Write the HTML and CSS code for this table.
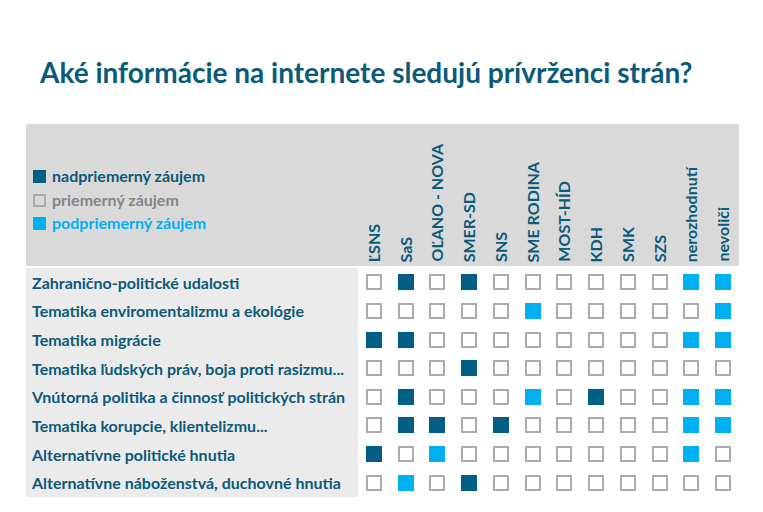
FILE: index.html
```html
<!DOCTYPE html>
<html lang="sk">
<head>
<meta charset="utf-8">
<title>Aké informácie na internete sledujú prívrženci strán?</title>
<link rel="stylesheet" href="styles.css">
</head>
<body>
<h1 class="title">Aké informácie na internete sledujú prívrženci strán?</h1>
<div class="chart">
  <div class="head">
    <div class="legend">
      <div class="leg leg-d"><span class="sq d"></span>nadpriemerný záujem</div>
      <div class="leg leg-e"><span class="sq e"></span>priemerný záujem</div>
      <div class="leg leg-l"><span class="sq l"></span>podpriemerný záujem</div>
    </div>
    <div class="colhead"><span>ĽSNS</span></div>
    <div class="colhead"><span>SaS</span></div>
    <div class="colhead"><span>OĽANO - NOVA</span></div>
    <div class="colhead"><span>SMER-SD</span></div>
    <div class="colhead"><span>SNS</span></div>
    <div class="colhead"><span>SME RODINA</span></div>
    <div class="colhead"><span>MOST-HÍD</span></div>
    <div class="colhead"><span>KDH</span></div>
    <div class="colhead"><span>SMK</span></div>
    <div class="colhead"><span>SZS</span></div>
    <div class="colhead"><span>nerozhodnutí</span></div>
    <div class="colhead"><span>nevoliči</span></div>
  </div>
  <div class="body">
    <div class="label">Zahranično-politické udalosti</div>
    <div class="cell"><span class="sq e"></span></div><div class="cell"><span class="sq d"></span></div><div class="cell"><span class="sq e"></span></div><div class="cell"><span class="sq d"></span></div><div class="cell"><span class="sq e"></span></div><div class="cell"><span class="sq e"></span></div><div class="cell"><span class="sq e"></span></div><div class="cell"><span class="sq e"></span></div><div class="cell"><span class="sq e"></span></div><div class="cell"><span class="sq e"></span></div><div class="cell"><span class="sq l"></span></div><div class="cell"><span class="sq l"></span></div>

    <div class="label">Tematika enviromentalizmu a ekológie</div>
    <div class="cell"><span class="sq e"></span></div><div class="cell"><span class="sq e"></span></div><div class="cell"><span class="sq e"></span></div><div class="cell"><span class="sq e"></span></div><div class="cell"><span class="sq e"></span></div><div class="cell"><span class="sq l"></span></div><div class="cell"><span class="sq e"></span></div><div class="cell"><span class="sq e"></span></div><div class="cell"><span class="sq e"></span></div><div class="cell"><span class="sq e"></span></div><div class="cell"><span class="sq e"></span></div><div class="cell"><span class="sq l"></span></div>

    <div class="label">Tematika migrácie</div>
    <div class="cell"><span class="sq d"></span></div><div class="cell"><span class="sq d"></span></div><div class="cell"><span class="sq e"></span></div><div class="cell"><span class="sq e"></span></div><div class="cell"><span class="sq e"></span></div><div class="cell"><span class="sq e"></span></div><div class="cell"><span class="sq e"></span></div><div class="cell"><span class="sq e"></span></div><div class="cell"><span class="sq e"></span></div><div class="cell"><span class="sq e"></span></div><div class="cell"><span class="sq l"></span></div><div class="cell"><span class="sq l"></span></div>

    <div class="label">Tematika ľudských práv, boja proti rasizmu...</div>
    <div class="cell"><span class="sq e"></span></div><div class="cell"><span class="sq e"></span></div><div class="cell"><span class="sq e"></span></div><div class="cell"><span class="sq d"></span></div><div class="cell"><span class="sq e"></span></div><div class="cell"><span class="sq e"></span></div><div class="cell"><span class="sq e"></span></div><div class="cell"><span class="sq e"></span></div><div class="cell"><span class="sq e"></span></div><div class="cell"><span class="sq e"></span></div><div class="cell"><span class="sq e"></span></div><div class="cell"><span class="sq e"></span></div>

    <div class="label">Vnútorná politika a činnosť politických strán</div>
    <div class="cell"><span class="sq e"></span></div><div class="cell"><span class="sq d"></span></div><div class="cell"><span class="sq e"></span></div><div class="cell"><span class="sq e"></span></div><div class="cell"><span class="sq e"></span></div><div class="cell"><span class="sq l"></span></div><div class="cell"><span class="sq e"></span></div><div class="cell"><span class="sq d"></span></div><div class="cell"><span class="sq e"></span></div><div class="cell"><span class="sq e"></span></div><div class="cell"><span class="sq l"></span></div><div class="cell"><span class="sq l"></span></div>

    <div class="label">Tematika korupcie, klientelizmu...</div>
    <div class="cell"><span class="sq e"></span></div><div class="cell"><span class="sq d"></span></div><div class="cell"><span class="sq d"></span></div><div class="cell"><span class="sq e"></span></div><div class="cell"><span class="sq d"></span></div><div class="cell"><span class="sq e"></span></div><div class="cell"><span class="sq e"></span></div><div class="cell"><span class="sq e"></span></div><div class="cell"><span class="sq e"></span></div><div class="cell"><span class="sq e"></span></div><div class="cell"><span class="sq l"></span></div><div class="cell"><span class="sq l"></span></div>

    <div class="label">Alternatívne politické hnutia</div>
    <div class="cell"><span class="sq d"></span></div><div class="cell"><span class="sq e"></span></div><div class="cell"><span class="sq l"></span></div><div class="cell"><span class="sq e"></span></div><div class="cell"><span class="sq e"></span></div><div class="cell"><span class="sq e"></span></div><div class="cell"><span class="sq e"></span></div><div class="cell"><span class="sq e"></span></div><div class="cell"><span class="sq e"></span></div><div class="cell"><span class="sq e"></span></div><div class="cell"><span class="sq l"></span></div><div class="cell"><span class="sq e"></span></div>

    <div class="label">Alternatívne náboženstvá, duchovné hnutia</div>
    <div class="cell"><span class="sq e"></span></div><div class="cell"><span class="sq l"></span></div><div class="cell"><span class="sq e"></span></div><div class="cell"><span class="sq d"></span></div><div class="cell"><span class="sq e"></span></div><div class="cell"><span class="sq e"></span></div><div class="cell"><span class="sq e"></span></div><div class="cell"><span class="sq e"></span></div><div class="cell"><span class="sq e"></span></div><div class="cell"><span class="sq e"></span></div><div class="cell"><span class="sq e"></span></div><div class="cell"><span class="sq e"></span></div>
  </div>
</div>
</body>
</html>
```

FILE: styles.css
```css
* { box-sizing: border-box; }
html, body { margin: 0; padding: 0; background: #ffffff; }
body {
  font-family: Lato, "Open Sans", "DejaVu Sans", sans-serif;
  font-weight: 700;
  color: #0b5a7a;
}
.title {
  margin: 55px 0 0 40px;
  font-size: 28px;
  line-height: 34px;
  font-weight: 700;
  color: #0b5a7a;
  letter-spacing: 0;
}
.chart {
  margin: 35px 0 0 26px;
  width: 713px;
}
.head, .body {
  display: grid;
  grid-template-columns: 332px repeat(12, 1fr);
}
.head {
  background: #d9d9d9;
  height: 142px;
}
.body {
  margin-top: 2px;
  grid-auto-rows: 28.625px;
}
.legend {
  display: flex;
  flex-direction: column;
  justify-content: center;
  padding: 10px 0 0 7px;
  gap: 3px;
}
.leg {
  display: flex;
  align-items: center;
  gap: 6px;
  font-size: 16px;
  line-height: 20.5px;
}
.leg .sq { width: 13px; height: 13px; }
.leg-d { color: #0b5a7a; }
.leg-e { color: #858585; }
.leg-l { color: #00b0f0; }
.leg .sq.e { background: transparent; }
.colhead {
  display: flex;
  justify-content: center;
  align-items: flex-end;
  padding-bottom: 4px;
}
.colhead span {
  writing-mode: vertical-rl;
  transform: rotate(180deg);
  font-size: 16px;
  line-height: 18px;
  color: #0b5a7a;
  white-space: nowrap;
}
.label {
  background: #ebebeb;
  display: flex;
  align-items: center;
  padding-left: 6px;
  font-size: 16px;
  color: #0b5a7a;
  white-space: nowrap;
}
.cell {
  display: flex;
  align-items: center;
  justify-content: center;
}
.sq {
  display: inline-block;
  width: 16px;
  height: 16px;
  flex: none;
}
.sq.d { background: #015e84; }
.sq.l { background: #00b0f0; }
.sq.e { background: #ffffff; border: 2px solid #ababab; }
```
